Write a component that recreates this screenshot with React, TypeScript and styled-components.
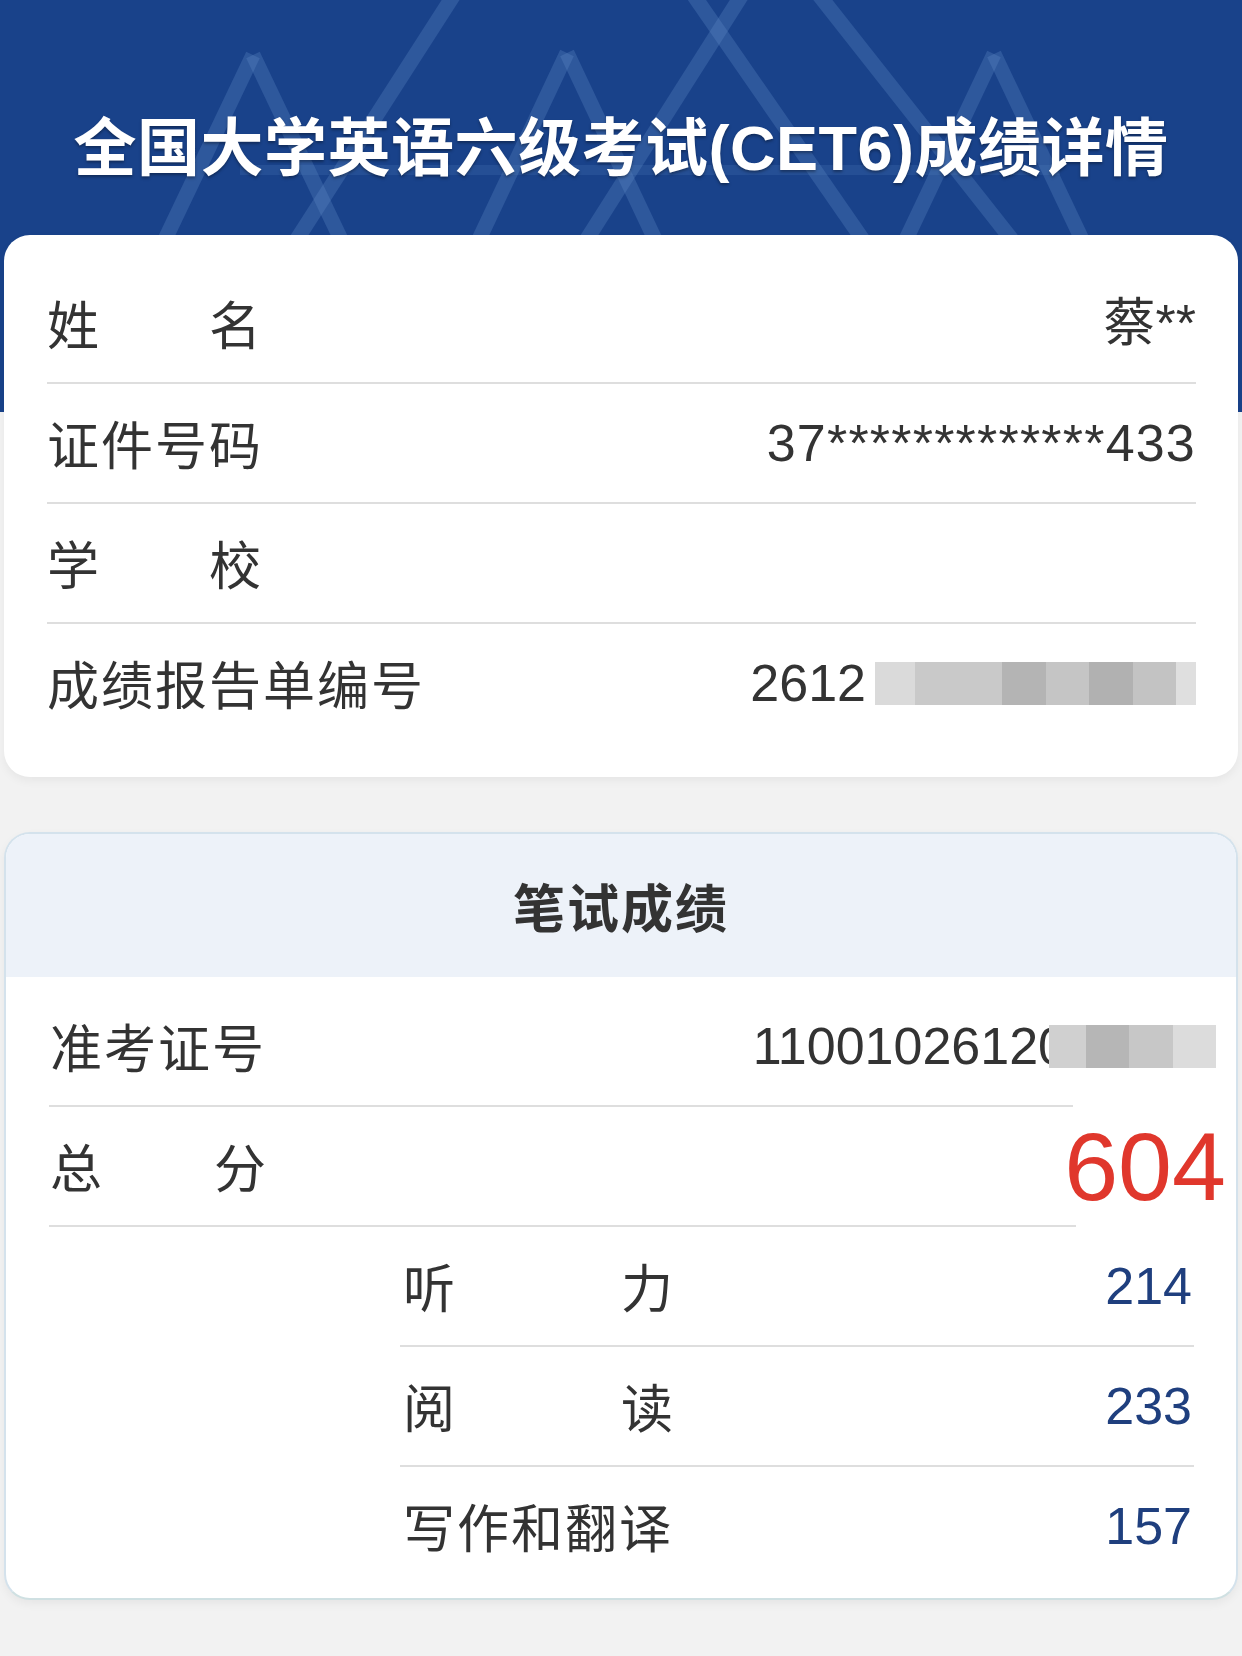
import React from "react";
import styled, { createGlobalStyle } from "styled-components";

const Global = createGlobalStyle`
  html, body { margin: 0; padding: 0; background: #f2f2f2; }
  * { box-sizing: border-box; }
`;

const Page = styled.div`
  width: 1242px;
  min-height: 1656px;
  background: #f2f2f2;
  display: flex;
  flex-direction: column;
  padding-bottom: 56px;
  font-family: "Noto Sans CJK SC", sans-serif;
`;

const Header = styled.header`
  position: relative;
  height: 412px;
  background: #19428a;
  overflow: hidden;
  padding-top: 108px;
  display: flex;
  justify-content: center;
`;

const Pattern = styled.svg`
  position: absolute;
  left: 0;
  top: 0;
  width: 1242px;
  height: 412px;
`;

const Title = styled.h1`
  position: relative;
  margin: 0;
  height: 80px;
  line-height: 80px;
  font-family: "Liberation Sans", "Noto Sans CJK SC", sans-serif;
  font-weight: 700;
  font-size: 63px;
  color: #ffffff;
  letter-spacing: 0.5px;
  text-shadow: 0 2px 3px rgba(0, 0, 0, 0.35);
  white-space: nowrap;
`;

const Card = styled.section<{ $pull?: number; $gap?: number }>`
  margin: ${(p) => (p.$pull ? `-${p.$pull}px` : `${p.$gap ?? 0}px`)} 4px 0;
  position: relative;
  background: #ffffff;
  border-radius: 26px;
  box-shadow: 0 4px 10px rgba(0, 0, 0, 0.05);
`;

const InfoCard = styled(Card)`
  padding: 29px 42px 35px 43px;
  display: flex;
  flex-direction: column;
`;

const ScoreCard = styled(Card)`
  border: 2px solid #d4e2ec;
  border-bottom-color: #cfe0e2;
  overflow: hidden;
  display: flex;
  flex-direction: column;
`;

const ScoreHead = styled.h2`
  margin: 0;
  height: 143px;
  background: #edf2f9;
  display: flex;
  align-items: center;
  justify-content: center;
  font-size: 52px;
  font-weight: 700;
  color: #333333;
  letter-spacing: 2px;
`;

const ScoreBody = styled.div`
  padding: 10px 0 13px;
  display: flex;
  flex-direction: column;
`;

const Row = styled.div<{ $padL?: number; $padR?: number }>`
  height: 118px;
  display: flex;
  align-items: center;
  justify-content: space-between;
  padding-left: ${(p) => p.$padL ?? 0}px;
  padding-right: ${(p) => p.$padR ?? 0}px;
  white-space: nowrap;
`;

const Rule = styled.div<{ $ml?: number; $mr?: number }>`
  height: 2px;
  background: #dedede;
  margin-left: ${(p) => p.$ml ?? 0}px;
  margin-right: ${(p) => p.$mr ?? 0}px;
`;

const Label = styled.div<{ $w?: number }>`
  font-size: 52px;
  line-height: 1;
  color: #333333;
  letter-spacing: 2px;
  display: flex;
  justify-content: space-between;
  width: ${(p) => (p.$w ? `${p.$w}px` : "auto")};
  & > span { letter-spacing: 0; }
`;

const Value = styled.div<{ $color?: string; $size?: number; $track?: number }>`
  font-family: "Liberation Sans", "Noto Sans CJK SC", sans-serif;
  font-size: ${(p) => p.$size ?? 52}px;
  line-height: 1;
  color: ${(p) => p.$color ?? "#333333"};
  letter-spacing: ${(p) => p.$track ?? 0}px;
  display: flex;
  align-items: center;
`;

const Mosaic = styled.div<{ $h: number; $ml: number }>`
  display: flex;
  height: ${(p) => p.$h}px;
  margin-left: ${(p) => p.$ml}px;
`;

const Tile = styled.div<{ $w: number; $c: string }>`
  width: ${(p) => p.$w}px;
  height: 100%;
  background: ${(p) => p.$c};
`;

const SubList = styled.div`
  margin-left: 394px;
  margin-right: 42px;
  display: flex;
  flex-direction: column;
`;

const Spread = ({ text, w }: { text: string; w: number }) => (
  <Label $w={w}>
    {text.split("").map((c, i) => (
      <span key={i}>{c}</span>
    ))}
  </Label>
);

const reportTiles: [number, string][] = [
  [40, "#dadada"],
  [87, "#c9c9c9"],
  [44, "#b4b4b4"],
  [43, "#c5c5c5"],
  [44, "#b1b1b1"],
  [43, "#c3c3c3"],
  [20, "#dfdfdf"],
];

const ticketTiles: [number, string][] = [
  [37, "#d0d0d0"],
  [43, "#b6b6b6"],
  [44, "#c7c7c7"],
  [43, "#dcdcdc"],
];

const patternLines: [number, number, number, number][] = [
  [457, -10, 290, 250],
  [690, -10, 870, 250],
  [745, -10, 580, 250],
  [815, -10, 1020, 250],
  [253, 55, 160, 250],
  [253, 55, 346, 250],
  [567, 53, 474, 250],
  [567, 53, 660, 250],
  [994, 54, 901, 250],
  [994, 54, 1087, 250],
];

const subScores = [
  { label: "听力", value: "214", spread: true },
  { label: "阅读", value: "233", spread: true },
  { label: "写作和翻译", value: "157", spread: false },
];

export default function App() {
  return (
    <>
      <Global />
      <Page>
        <Header>
          <Pattern viewBox="0 0 1242 412" aria-hidden="true">
            <g stroke="rgba(95,140,200,0.3)" strokeWidth={15} fill="none">
              {patternLines.map(([x1, y1, x2, y2], i) => (
                <line key={i} x1={x1} y1={y1} x2={x2} y2={y2} />
              ))}
              <line x1={240} y1={170} x2={1060} y2={170} strokeWidth={10} stroke="rgba(95,140,200,0.18)" />
            </g>
          </Pattern>
          <Title>全国大学英语六级考试(CET6)成绩详情</Title>
        </Header>

        <InfoCard $pull={177}>
          <Row>
            <Spread text="姓名" w={214} />
            <Value>蔡**</Value>
          </Row>
          <Rule />
          <Row>
            <Label>证件号码</Label>
            <Value $track={1.2}>37*************433</Value>
          </Row>
          <Rule />
          <Row>
            <Spread text="学校" w={214} />
            <Value />
          </Row>
          <Rule />
          <Row>
            <Label>成绩报告单编号</Label>
            <Value>
              2612
              <Mosaic $h={43} $ml={9}>
                {reportTiles.map(([w, c], i) => (
                  <Tile key={i} $w={w} $c={c} />
                ))}
              </Mosaic>
            </Value>
          </Row>
        </InfoCard>

        <ScoreCard $gap={55}>
          <ScoreHead>笔试成绩</ScoreHead>
          <ScoreBody>
            <Row $padL={44} $padR={20}>
              <Label>准考证号</Label>
              <Value>
                11001026120
                <Mosaic $h={43} $ml={-18}>
                  {ticketTiles.map(([w, c], i) => (
                    <Tile key={i} $w={w} $c={c} />
                  ))}
                </Mosaic>
              </Value>
            </Row>
            <Rule $ml={43} $mr={163} />
            <Row $padL={44} $padR={10}>
              <Spread text="总分" w={216} />
              <Value $color="#e0372c" $size={97}>
                604
              </Value>
            </Row>
            <Rule $ml={43} $mr={160} />
            <SubList>
              {subScores.map((s, i) => (
                <React.Fragment key={s.label}>
                  {i > 0 && <Rule />}
                  <Row $padL={3} $padR={2}>
                    {s.spread ? <Spread text={s.label} w={270} /> : <Label>{s.label}</Label>}
                    <Value $color="#1f3f7e">{s.value}</Value>
                  </Row>
                </React.Fragment>
              ))}
            </SubList>
          </ScoreBody>
        </ScoreCard>
      </Page>
    </>
  );
}
